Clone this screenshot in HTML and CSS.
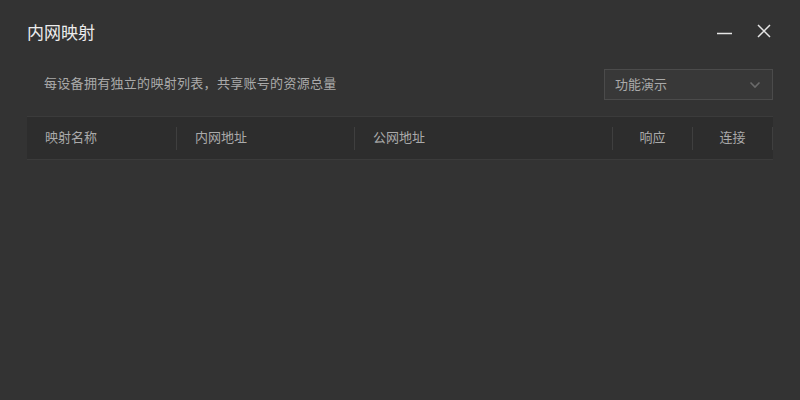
FILE: index.html
```html
<!DOCTYPE html>
<html lang="zh-CN">
<head>
  <meta charset="UTF-8">
  <title>内网映射</title>
  <link rel="stylesheet" href="styles.css">
</head>
<body>
  <div class="window">
    <div class="titlebar">
      <h2>内网映射</h2>
      <div class="controls">
        <svg class="ctl" width="15" height="14" viewBox="0 0 15 14"><path d="M0 9.5h15" stroke="#e6e6e6" stroke-width="1.5"/></svg>
        <svg class="ctl" width="14" height="14" viewBox="0 0 14 14"><path d="M1 1l12 12M13 1L1 13" stroke="#e6e6e6" stroke-width="1.5"/></svg>
      </div>
    </div>

    <div class="toolbar">
      <p class="hint">每设备拥有独立的映射列表，共享账号的资源总量</p>
      <div class="select">
        <span>功能演示</span>
        <svg width="12" height="8" viewBox="0 0 12 8"><path d="M1.5 1.5l4.5 4.5 4.5-4.5" fill="none" stroke="#6a6a6a" stroke-width="1.6"/></svg>
      </div>
    </div>

    <div class="table-head">
      <div class="col col-name">映射名称</div>
      <div class="col col-local">内网地址</div>
      <div class="col col-public">公网地址</div>
      <div class="col col-small">响应</div>
      <div class="col col-small">连接</div>
    </div>
  </div>
</body>
</html>
```

FILE: styles.css
```css
body {
  margin: 0;
  background-color: #333333;
  font-family: "Noto Sans CJK SC", "Noto Sans", sans-serif;
  width: 800px;
  height: 400px;
  overflow: hidden;
}

.titlebar {
  display: flex;
  align-items: center;
  justify-content: space-between;
  height: 62px;
  padding: 0 29px 0 27px;
}

h2 {
  margin: 0;
  font-size: 17px;
  font-weight: normal;
  color: #ececec;
}

.controls {
  display: flex;
  align-items: center;
  gap: 25px;
}

.toolbar {
  display: flex;
  align-items: center;
  justify-content: space-between;
  margin-top: 7px;
  padding: 0 27px 0 44px;
}

.hint {
  margin: 0 0 4px;
  font-size: 13px;
  letter-spacing: 0.3px;
  color: #aaaaaa;
}

.select {
  box-sizing: border-box;
  width: 169px;
  height: 31px;
  display: flex;
  align-items: center;
  justify-content: space-between;
  padding: 0 11px 2px 10px;
  background-color: #383838;
  border: 1px solid #4b4b4b;
  font-size: 13px;
  color: #aaaaaa;
}

.select svg {
  margin-top: 2px;
}

.table-head {
  display: flex;
  align-items: center;
  height: 42px;
  margin: 16px 27px 0;
  background-color: #2d2d2d;
  border-top: 1px solid #3b3b3b;
  border-bottom: 1px solid #3b3b3b;
  font-size: 13px;
  color: #aaaaaa;
}

.col {
  box-sizing: border-box;
  height: 23px;
  display: flex;
  align-items: center;
  padding: 0 0 3px 18px;
  border-right: 1px solid #3f3f3f;
}

.col-name { width: 150px; }
.col-local { width: 178px; }
.col-public { width: 258px; }

.col-small {
  width: 80px;
  padding-left: 0;
  justify-content: center;
}
```
